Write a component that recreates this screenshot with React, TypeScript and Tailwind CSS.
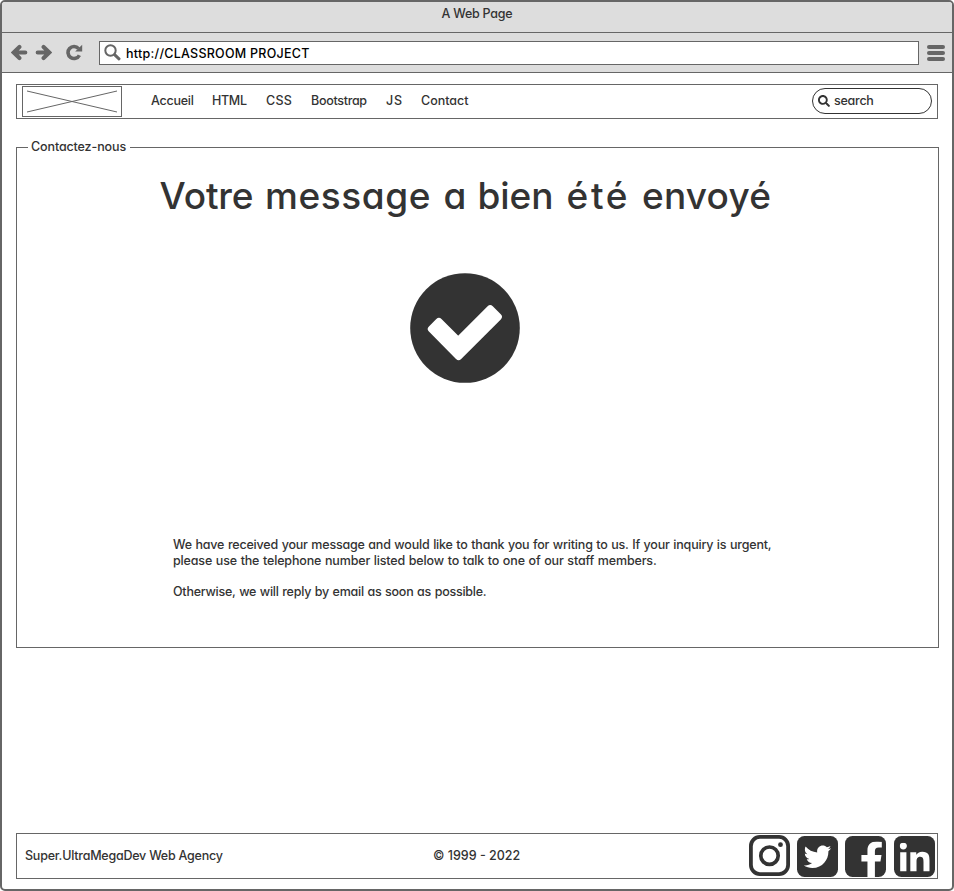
import React from "react";
import { FaFacebookF, FaLinkedinIn, FaSearch, FaTwitter } from "react-icons/fa";

const navItems = [
  { label: "Accueil", style: "w-[61px] tracking-[-0.25px]" },
  { label: "HTML", style: "w-[54px] tracking-[-0.3px]" },
  { label: "CSS", style: "w-[45px] tracking-[0.3px]" },
  { label: "Bootstrap", style: "w-[75px] tracking-[-0.3px]" },
  { label: "JS", style: "w-[35px] tracking-[0.8px]" },
  { label: "Contact", style: "w-[60px] tracking-[0px]" },
];

const headingWords = [
  { word: "Votre", style: "w-[105.5px] tracking-[-0.1px]" },
  { word: "message", style: "w-[178.5px] tracking-[0.6px]" },
  { word: "a", style: "w-[34px]" },
  { word: "bien", style: "w-[89px] tracking-[-0.1px]" },
  { word: "été", style: "w-[75.5px] tracking-[2.7px]" },
  { word: "envoyé", style: "w-[140px] tracking-[0.2px]" },
];

function Tile({ children }: { children: React.ReactNode }) {
  return (
    <svg className="h-[41px] w-[41px] shrink-0" viewBox="0 0 41 41">
      <rect width="41" height="41" rx="7.5" fill="#333" />
      {children}
    </svg>
  );
}

function Arrow({ className }: { className: string }) {
  return (
    <svg className={"h-[17px] w-[17px] shrink-0 " + className} viewBox="0 0 17 17" fill="none" stroke="#666">
      <path d="M8.4 3L2.6 8.5L8.4 14M4 8.5H14.3" strokeWidth="4.1" strokeLinecap="round" strokeLinejoin="miter" />
    </svg>
  );
}

function TitleBar() {
  return (
    <div className="h-[31px] border-b border-[#666] bg-[#ddd] text-center leading-[23px]">
      <span className="tracking-[-0.25px]">A Web Page</span>
    </div>
  );
}

function AddressBar() {
  return (
    <div className="flex h-10 items-center border-b border-[#666] bg-[#ddd] pl-[9px] pr-[7px] text-[#666]">
      <Arrow className="" />
      <Arrow className="ml-[7px] rotate-180" />
      <svg className="ml-[14px] h-[17px] w-[17px] shrink-0" viewBox="0 0 17 17">
        <path d="M12.6 4.6A6 6 0 1 0 13.4 11.2" fill="none" stroke="#666" strokeWidth="3.6" />
        <path d="M16.2 .8V7.6H9.2Z" fill="#666" />
      </svg>
      <div className="ml-[16px] flex h-6 w-[820px] items-center border border-[#666] bg-white pl-1">
        <svg className="h-[17px] w-[17px]" viewBox="0 0 17 17" fill="none" stroke="#666">
          <circle cx="6.5" cy="6.5" r="5.2" strokeWidth="2" />
          <path d="M10.8 10.8L15 14.8" strokeWidth="3" strokeLinecap="round" />
        </svg>
        <span className="ml-[5px] pt-[3px] tracking-[0.26px] text-black">http://CLASSROOM PROJECT</span>
      </div>
      <div className="ml-[8px] flex w-[18px] flex-col gap-[2px]">
        <i className="h-1 rounded-full bg-[#666]" />
        <i className="h-1 rounded-full bg-[#666]" />
        <i className="h-1 rounded-full bg-[#666]" />
      </div>
    </div>
  );
}

function NavBar() {
  return (
    <nav className="ml-[14px] mt-[11px] flex h-[35px] w-[922px] items-center border border-[#666] pl-[5px] pr-[5px]">
      <svg className="h-[31px] w-[100px] shrink-0 border border-[#666]" viewBox="0 0 98 29" stroke="#666">
        <path d="M4 4L94 25M4 25L94 4" />
      </svg>
      <ul className="ml-[29px] flex">
        {navItems.map((item) => (
          <li key={item.label} className={item.style}>{item.label}</li>
        ))}
      </ul>
      <div className="mb-[1px] ml-auto flex h-[26px] w-[120px] items-center rounded-full border border-[#333] pl-[5px]">
        <FaSearch className="h-3 w-3" />
        <span className="ml-[4px] tracking-[-0.25px]">search</span>
      </div>
    </nav>
  );
}

function ContactPanel() {
  return (
    <section className="ml-[14px] mt-[28px] h-[501px] w-[923px] border border-[#666]">
      <div className="-mt-[9px] ml-[11px] h-4 w-[102px] whitespace-nowrap bg-white pl-[3px] leading-4">
        <span className="tracking-[-0.12px]">Contactez-nous</span>
      </div>
      <h1 className="ml-[142.5px] mt-[17px] h-[48px] whitespace-nowrap text-[37px] leading-[48px]">
        {headingWords.map(({ word, style }) => (
          <span key={word} className={"inline-block " + style}>{word + " "}</span>
        ))}
      </h1>
      <svg className="ml-[393px] mt-[53px] h-[110px] w-[110px]" viewBox="0 0 110 110">
        <circle cx="55" cy="55" r="54.8" fill="#333" />
        <path
          d="M21.5 56L28.9 48.6L48.2 67.9L80.2 35.9L88.2 43.9L48.6 83.5Z"
          fill="#fff"
          stroke="#fff"
          strokeWidth="7.3"
          strokeLinejoin="round"
        />
      </svg>
      <div className="ml-[156px] mt-[154px] whitespace-nowrap leading-[15.7px] [word-spacing:0.5px]">
        <p className="tracking-[-0.195px]">We have received your message and would like to thank you for writing to us. If your inquiry is urgent,</p>
        <p className="tracking-[-0.15px]">please use the telephone number listed below to talk to one of our staff members.</p>
        <p className="mt-[15.7px] tracking-[-0.235px]">Otherwise, we will reply by email as soon as possible.</p>
      </div>
    </section>
  );
}

function Footer() {
  return (
    <footer className="ml-[14px] mt-[185px] flex h-[46px] w-[922px] items-center border border-[#666] pl-[8px] pr-[2.5px]">
      <span className="w-[408px] tracking-[-0.23px]">Super.UltraMegaDev Web Agency</span>
      <span className="tracking-[0px]">© 1999 - 2022</span>
      <div className="ml-auto flex gap-[7.3px]">
        <svg className="-mt-[0.5px] h-[41px] w-[41px] shrink-0" viewBox="0 0 41 41" fill="none" stroke="#333">
          <rect x="1.9" y="1.9" width="37.2" height="37.2" rx="9" strokeWidth="3.8" />
          <circle cx="20.5" cy="20.7" r="8.7" strokeWidth="3.7" />
          <circle cx="31.5" cy="9.7" r="2.4" fill="#333" stroke="none" />
        </svg>
        <Tile>
          <FaTwitter x="6.7" y="7" className="h-[27.5px] w-[27.5px]" color="#fff" />
        </Tile>
        <Tile>
          <FaFacebookF x="14.7" y="5.5" className="h-[35.6px] w-[23.8px]" preserveAspectRatio="none" color="#fff" />
        </Tile>
        <Tile>
          <FaLinkedinIn x="5.7" y="6.7" className="h-[32.5px] w-[30px]" preserveAspectRatio="none" color="#fff" />
        </Tile>
      </div>
    </footer>
  );
}

export default function App() {
  return (
    <div className="h-[891px] w-[954px] overflow-hidden rounded-[5px] border-2 border-[#666] bg-white font-['Inter','Noto_Sans',sans-serif] text-[12.5px] font-medium text-[#333] [font-feature-settings:'cv11']">
      <TitleBar />
      <AddressBar />
      <NavBar />
      <ContactPanel />
      <Footer />
    </div>
  );
}
